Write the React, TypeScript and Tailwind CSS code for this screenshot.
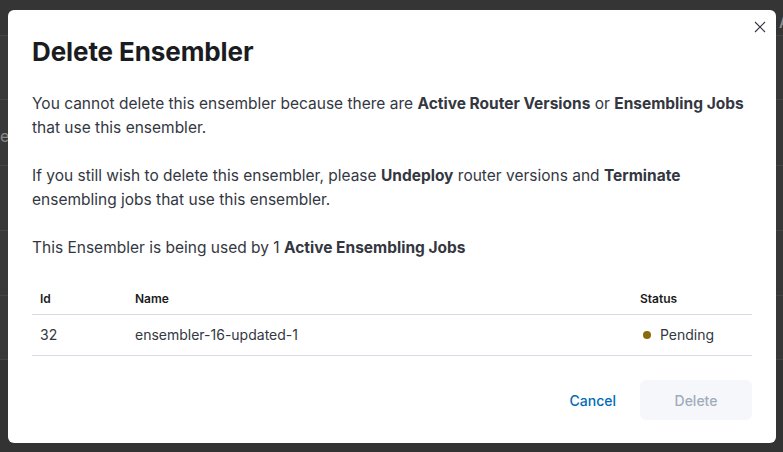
import React from "react";

export default function App() {
  return (
    <div
      className="relative w-[783px] h-[452px] overflow-hidden bg-[#383838]"
      style={{ fontFamily: "Inter, 'Noto Sans', sans-serif" }}
    >
      {/* dimmed underlying page */}
      <div className="absolute inset-0 flex flex-col">
        <div className="h-[36px] border-b border-[#454545] bg-[#353535]" />
        <div className="h-[64px] border-b border-[#454545]" />
        <div className="h-[66px] border-b border-[#454545]" />
        <div className="h-[65px] border-b border-[#454545]" />
        <div className="h-[65px] border-b border-[#454545]" />
        <div className="h-[64px] border-b border-[#454545]" />
        <div className="flex-1 bg-[#333333]" />
        <div className="absolute left-[0px] top-[128px] text-[16px] text-[#8a8a8a] leading-none">e</div>
        <div className="absolute left-[779px] top-[16px] text-[14px] text-[#8a8a8a] leading-none font-semibold">A</div>
      </div>

      {/* modal */}
      <div className="absolute left-[8px] top-[10px] w-[768px] h-[433px] bg-white rounded-[6px] flex flex-col text-[#343741]">
        <button className="absolute right-[10px] top-[11px] w-[12px] h-[12px] flex items-center justify-center">
          <svg width="12" height="12" viewBox="0 0 12 12">
            <path d="M1 1 L11 11 M11 1 L1 11" stroke="#343741" strokeWidth="1.1" />
          </svg>
        </button>
        <div className="px-[24px] pt-[24px] pb-[16px]">
          <h1 className="text-[26px] leading-[36px] font-bold text-[#1a1c21] tracking-[-0.1px]">
            Delete Ensembler
          </h1>
        </div>
        <div className="px-[24px] pt-[6px] text-[15.5px] leading-[24px] flex flex-col gap-[24px]">
          <p>
            You cannot delete this ensembler because there are{" "}
            <b className="font-bold">Active Router Versions</b> or{" "}
            <b className="font-bold">Ensembling Jobs</b> that use this ensembler.
          </p>
          <p>
            If you still wish to delete this ensembler, please{" "}
            <b className="font-bold">Undeploy</b> router versions and{" "}
            <b className="font-bold">Terminate</b> ensembling jobs that use this ensembler.
          </p>
          <p>
            This Ensembler is being used by 1 <b className="font-bold">Active Ensembling Jobs</b>
          </p>
          <table className="w-[720px] mt-[-1px] text-[14px] border-collapse">
            <thead>
              <tr className="border-b border-[#d3dae6]">
                <th className="w-[95px] text-left px-[8px] pt-[8px] pb-[7px] text-[12px] font-semibold text-[#1a1c21] leading-[16px]">Id</th>
                <th className="text-left px-[8px] pt-[8px] pb-[7px] text-[12px] font-semibold text-[#1a1c21] leading-[16px]">Name</th>
                <th className="w-[120px] text-left px-[8px] pt-[8px] pb-[7px] text-[12px] font-semibold text-[#1a1c21] leading-[16px]">Status</th>
              </tr>
            </thead>
            <tbody>
              <tr className="border-b border-[#d3dae6]">
                <td className="px-[8px] py-[10px] leading-[20px]">32</td>
                <td className="px-[8px] py-[10px] leading-[20px]">ensembler-16-updated-1</td>
                <td className="px-[8px] py-[10px] leading-[20px]">
                  <span className="flex items-center gap-[9px]">
                    <span className="w-[8px] h-[8px] rounded-full bg-[#8a6a0a] ml-[3px]" />
                    Pending
                  </span>
                </td>
              </tr>
            </tbody>
          </table>
        </div>
        <div className="mt-auto px-[24px] pb-[23px] flex justify-end items-center gap-[12px]">
          <button className="h-[40px] px-[12px] text-[14px] font-medium text-[#006bb8]">Cancel</button>
          <button className="h-[40px] w-[112px] rounded-[6px] bg-[#f5f7fa] text-[14px] font-medium text-[#a2abba]">
            Delete
          </button>
        </div>
      </div>
    </div>
  );
}
